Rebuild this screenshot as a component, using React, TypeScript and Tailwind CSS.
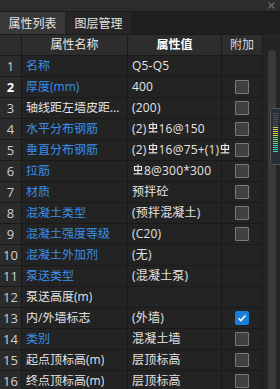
import React from "react"

type Row = {
  name: string
  value: React.ReactNode
  blue?: boolean
  box?: "off" | "on"
}

// HRB400 rebar mark
function Rebar() {
  return (
    <svg width="10" height="12" viewBox="0 0 10 12" className="inline-block shrink-0 mx-[1px] -mt-[3px] align-middle">
      <path d="M1.5 2.5h7v3.8h-7z M5 0.5v8.8 M0.6 9.8h8.8" fill="none" stroke="#e6e6e6" strokeWidth="1.2" />
    </svg>
  )
}

const rows: Row[] = [
  { name: "名称", value: "Q5-Q5", blue: true },
  { name: "厚度(mm)", value: "400", blue: true, box: "off" },
  { name: "轴线距左墙皮距离(mm)", value: "(200)", box: "off" },
  { name: "水平分布钢筋", value: <>(2)<Rebar />16@150</>, blue: true, box: "off" },
  { name: "垂直分布钢筋", value: <>(2)<Rebar />16@75+(1)<Rebar /></>, blue: true, box: "off" },
  { name: "拉筋", value: <><Rebar />8@300*300</>, blue: true, box: "off" },
  { name: "材质", value: "预拌砼", blue: true, box: "off" },
  { name: "混凝土类型", value: "(预拌混凝土)", blue: true, box: "off" },
  { name: "混凝土强度等级", value: "(C20)", blue: true, box: "off" },
  { name: "混凝土外加剂", value: "(无)", blue: true },
  { name: "泵送类型", value: "(混凝土泵)", blue: true },
  { name: "泵送高度(m)", value: "" },
  { name: "内/外墙标志", value: "(外墙)", box: "on" },
  { name: "类别", value: "混凝土墙", blue: true, box: "off" },
  { name: "起点顶标高(m)", value: "层顶标高", box: "off" },
  { name: "终点顶标高(m)", value: "层顶标高", box: "off" },
]

function Check({ on }: { on: boolean }) {
  if (on) {
    return (
      <div className="w-[14px] h-[14px] rounded-[2px] bg-[#1a7fd6] flex items-center justify-center">
        <svg width="10" height="10" viewBox="0 0 10 10">
          <path d="M1.5 5.2l2.3 2.3 4.7-5" fill="none" stroke="#fff" strokeWidth="1.6" />
        </svg>
      </div>
    )
  }
  return <div className="w-[14px] h-[14px] rounded-[1px] border border-[#7a7a7a] bg-[#404040]" />
}

export default function App() {
  return (
    <div
      className="w-[280px] h-[389px] overflow-hidden bg-[#1f1f1f] text-[12px] text-[#e4e4e4] leading-none"
      style={{ fontFamily: '"Open Sans", "Noto Sans CJK SC", sans-serif' }}
    >
      {/* title bar */}
      <div className="h-[12px] bg-[#2c2c2c] border-b border-[#1a1a1a] flex items-center justify-end pr-[5px]">
        <svg width="7" height="7" viewBox="0 0 7 7">
          <path d="M0.5 0.5l6 6M6.5 0.5l-6 6" stroke="#6a6a6a" strokeWidth="1.2" />
        </svg>
      </div>

      {/* tabs */}
      <div className="h-[22px] flex bg-[#1f1f1f]">
        <div className="w-[65px] bg-[#383838] flex items-center justify-center pt-[1px]">属性列表</div>
        <div className="w-[65px] ml-[1px] bg-[#262626] flex items-center justify-center pt-[1px]">图层管理</div>
      </div>

      <div className="flex items-start">
        <div className="w-[263px] grid grid-cols-[22px_106px_94px_41px] content-start border-t border-[#1a1a1a]">
          {/* header */}
          <div className="h-[21px] bg-[#2d2d2d] border-r border-b border-[#1a1a1a]" />
          <div className="h-[21px] bg-[#2d2d2d] border-r border-b border-[#1a1a1a] flex items-center justify-center text-[#e8e8e8]">
            属性名称
          </div>
          <div className="h-[21px] bg-[#2d2d2d] border-r border-b border-[#1a1a1a] flex items-center justify-center font-bold text-white">
            属性值
          </div>
          <div className="h-[21px] bg-[#2d2d2d] border-r border-b border-[#1a1a1a] flex items-center justify-center text-[#d8d8d8]">
            附加
          </div>

          {rows.map((r, i) => (
            <React.Fragment key={i}>
              <div
                className={
                  "h-[21px] bg-[#2b2b2b] border-r border-b border-[#1a1a1a] flex items-center justify-center text-[13px] " +
                  (i === 1 ? "font-bold text-white" : "text-[#cfcfcf]")
                }
              >
                {i + 1}
              </div>
              <div
                className={
                  "h-[21px] bg-[#232323] border-r border-b border-[#1a1a1a] flex items-center pl-[4px] pr-[2px] overflow-hidden " +
                  (r.blue ? "text-[#3a8fe8]" : "text-[#e2e2e2]")
                }
              >
                <span className="truncate">{r.name}</span>
              </div>
              <div className="h-[21px] bg-[#232323] border-r border-b border-[#1a1a1a] flex items-center pl-[4px] relative z-10">
                <span className="whitespace-nowrap shrink-0 tracking-[0.2px]">{r.value}</span>
              </div>
              <div className="h-[21px] bg-[#232323] border-r border-b border-[#1a1a1a] flex items-center justify-center">
                {r.box && <Check on={r.box === "on"} />}
              </div>
            </React.Fragment>
          ))}
        </div>

        {/* scrollbar */}
        <div className="w-[17px] h-[360px] bg-[#242424] relative">
          <div className="absolute left-[5px] top-[16px] bottom-0 w-[8px] rounded-t-full bg-[#3a3a3a]" />
          <div className="absolute left-[7px] top-[74px] w-[12px] h-[57px] rounded-[3px] bg-[#2a2e35] border border-[#4d535c] flex flex-col items-start pt-[4px] pl-[2px] gap-[1px]">
            {Array.from({ length: 20 }).map((_, k) => (
              <div
                key={k}
                className={
                  "w-[5px] h-[1px] " +
                  (k < 7 ? "bg-[#4a4f57]" : k < 12 ? "bg-[#d8d03a]" : k < 16 ? "bg-[#6cd46a]" : "bg-[#3cd6b0]")
                }
              />
            ))}
          </div>
        </div>
      </div>
    </div>
  )
}
